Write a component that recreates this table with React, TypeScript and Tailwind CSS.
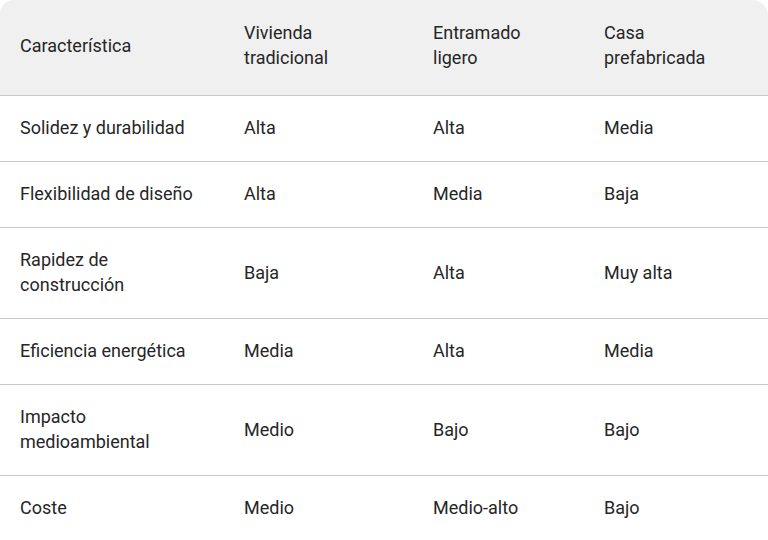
import React from "react";

const rows: string[][] = [
  ["Solidez y durabilidad", "Alta", "Alta", "Media"],
  ["Flexibilidad de diseño", "Alta", "Media", "Baja"],
  ["Rapidez de construcción", "Baja", "Alta", "Muy alta"],
  ["Eficiencia energética", "Media", "Alta", "Media"],
  ["Impacto medioambiental", "Medio", "Bajo", "Bajo"],
  ["Coste", "Medio", "Medio-alto", "Bajo"],
];

export default function App() {
  return (
    <div className="w-[768px] h-[540px] overflow-hidden bg-white text-[#262626]" style={{ fontFamily: "Roboto, 'Liberation Sans', sans-serif" }}>
      <table className="w-[768px] table-fixed border-collapse text-[18px] leading-[25px]">
        <colgroup>
          <col className="w-[224px]" />
          <col className="w-[189px]" />
          <col className="w-[171px]" />
          <col className="w-[184px]" />
        </colgroup>
        <thead>
          <tr className="bg-[#f0f0f0] border-b border-[#c8c8c8]">
            <th className="text-left font-normal align-middle pl-5 pr-6 pt-5 pb-[25px] rounded-tl-[14px]">Característica</th>
            <th className="text-left font-normal align-middle pl-5 pr-6 pt-5 pb-[25px]">Vivienda tradicional</th>
            <th className="text-left font-normal align-middle pl-5 pr-6 pt-5 pb-[25px]">Entramado ligero</th>
            <th className="text-left font-normal align-middle pl-5 pr-6 pt-5 pb-[25px] rounded-tr-[16px]">Casa prefabricada</th>
          </tr>
        </thead>
        <tbody>
          {rows.map((r, i) => (
            <tr key={i} className="border-b border-[#c8c8c8]">
              {r.map((c, j) => (
                <td key={j} className="align-middle pl-5 pr-6 pt-[19px] pb-[21px]">{c}</td>
              ))}
            </tr>
          ))}
        </tbody>
      </table>
    </div>
  );
}
